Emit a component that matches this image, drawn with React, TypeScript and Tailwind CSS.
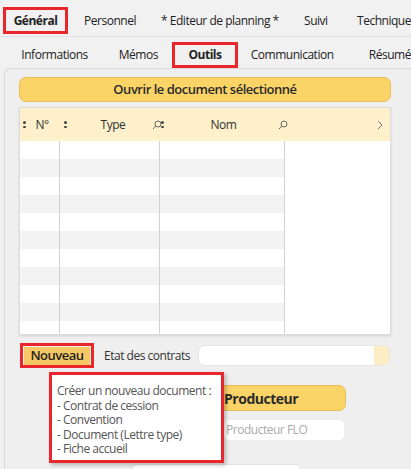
import React from "react";

const font = { fontFamily: '"Open Sans", "Noto Sans", "Liberation Sans", sans-serif' };

function Dots() {
  return (
    <span className="inline-flex flex-col gap-[2px] justify-center">
      <span className="block w-[2.5px] h-[2.5px] rounded-full bg-[#444]" />
      <span className="block w-[2.5px] h-[2.5px] rounded-full bg-[#444]" />
    </span>
  );
}

function Search() {
  return (
    <svg width="10" height="10" viewBox="0 0 10 10" fill="none" stroke="#666" strokeWidth="1">
      <circle cx="6" cy="4" r="3" />
      <line x1="3.8" y1="6.2" x2="1" y2="9" />
    </svg>
  );
}

export default function App() {
  const rows = Array.from({ length: 11 });
  return (
    <div className="w-[411px] h-[469px] bg-[#f1f1f1] overflow-hidden relative text-[#222] tracking-[-0.03em]" style={font}>
      {/* Top tabs */}
      <div className="flex items-start h-[37px] border-b border-[#e2e2e2] text-[12px] whitespace-nowrap">
        <div className="ml-[3px] mt-[7px] w-[70px] h-[27px] border-[3px] border-[#e8262b] flex items-center justify-center font-bold">Général</div>
        <div className="mt-[7px] h-[27px] w-[91px] flex items-center justify-center">Personnel</div>
        <div className="mt-[7px] h-[27px] w-[147px] flex items-center justify-center">* Editeur de planning *</div>
        <div className="mt-[7px] h-[27px] w-[61px] flex items-center justify-center">Suivi</div>
        <div className="mt-[7px] h-[27px] pl-[13px] flex items-center">Technique</div>
      </div>
      {/* Sub tabs */}
      <div className="flex items-start h-[31px] text-[12px] whitespace-nowrap">
        <div className="mt-[5px] h-[26px] w-[120px] flex items-center justify-center">Informations</div>
        <div className="mt-[5px] h-[26px] w-[64px] flex items-center justify-center">Mémos</div>
        <div className="ml-[5px] mt-[5px] w-[71px] h-[26px] border-[3px] border-[#e8262b] flex items-center justify-center font-bold">Outils</div>
        <div className="mt-[5px] h-[26px] w-[120px] flex items-center justify-center">Communication</div>
        <div className="mt-[5px] h-[26px] pl-[22px] flex items-center">Résumé</div>
      </div>
      {/* Panel */}
      <div className="ml-[4px] border-l border-t border-[#d9d9d9] rounded-tl-[6px] bg-[#efefef] h-[420px] pl-[14px] pt-[8px]">
        <div className="w-[372px] h-[25px] rounded-[7px] bg-[#fbd468] border border-[#e8bd55] flex items-center justify-center text-[13px] font-semibold text-[#2a2a2a]">
          Ouvrir le document sélectionné
        </div>
        {/* Table */}
        <div className="mt-[5px] w-[372px] h-[228px] bg-white border border-[#dcdcdc] shadow-[0_1px_2px_rgba(0,0,0,0.12)] flex flex-col overflow-hidden">
          <div className="h-[33px] shrink-0 bg-[#fdf0cb] flex items-center text-[12px] text-[#333] relative">
            <div className="w-[40px] flex items-center pl-[3px] gap-[10px]"><Dots /><span>N°</span></div>
            <div className="w-[100px] flex items-center pl-[4px]"><Dots /><span className="ml-[34px]">Type</span><span className="ml-[27px]"><Search /></span></div>
            <div className="w-[125px] flex items-center pl-[1px]"><Dots /><span className="ml-[47px]">Nom</span><span className="ml-[42px]"><Search /></span></div>
            <div className="flex-1 flex justify-end pr-[6px]">
              <svg width="8" height="10" viewBox="0 0 8 10" fill="none" stroke="#777" strokeWidth="1"><polyline points="2,1 6,5 2,9" /></svg>
            </div>
          </div>
          <div className="flex-1 flex">
            <div className="w-[265px] flex flex-col">
              {rows.map((_, i) => (
                <div key={i} className={`h-[18px] shrink-0 flex ${i % 2 === 1 ? "bg-[#f3f3f3]" : "bg-white"}`}>
                  <div className="w-[40px] border-r border-[#d2d2d2]" />
                  <div className="w-[100px] border-r border-[#d2d2d2]" />
                  <div className="w-[125px] border-r border-[#d2d2d2]" />
                </div>
              ))}
            </div>
            <div className="flex-1 bg-white" />
          </div>
        </div>
        {/* Nouveau row */}
        <div className="mt-[8px] flex items-center">
          <div className="ml-[1px] w-[74px] h-[25px] border-[3px] border-[#e8262b] flex items-center justify-center">
            <div className="w-[66px] h-[18px] bg-[#f6c865] flex items-center justify-center text-[13px] font-semibold text-[#222]">Nouveau</div>
          </div>
          <span className="ml-[10px] text-[12px] text-[#333]">Etat des contrats</span>
          <div className="ml-[8px] w-[192px] h-[21px] rounded-[6px] bg-white border border-[#e6e6e6] flex justify-end overflow-hidden">
            <div className="w-[15px] h-full bg-[#fdedc4]" />
          </div>
        </div>
        {/* Producteur */}
        <div className="mt-[17px] ml-[182px] w-[145px] h-[26px] rounded-[7px] bg-[#fbd468] border border-[#e8bd55] flex items-center pl-[22px] text-[14px] font-bold text-[#2a2a2a]">
          Producteur
        </div>
        <div className="mt-[9px] ml-[205px] w-[120px] h-[20px] rounded-[5px] bg-white flex items-center pl-[2px] text-[12px] text-[#aaa]">
          Producteur FLO
        </div>
        <div className="mt-[24px] ml-[112px] w-[170px] h-[20px] rounded-[6px] bg-white border border-[#e3e3e3]" />
      </div>
      {/* Tooltip */}
      <div className="absolute left-[49px] top-[372px] w-[175px] h-[91px] border-[3px] border-[#e8262b] bg-white shadow-[2px_2px_4px_rgba(0,0,0,0.25)] pl-[5px] pt-[9px] text-[12px] leading-[14.5px] text-[#555] whitespace-nowrap overflow-hidden">
        <div>Créer un nouveau document :</div>
        <div>- Contrat de cession</div>
        <div>- Convention</div>
        <div>- Document (Lettre type)</div>
        <div>- Fiche accueil</div>
      </div>
    </div>
  );
}
